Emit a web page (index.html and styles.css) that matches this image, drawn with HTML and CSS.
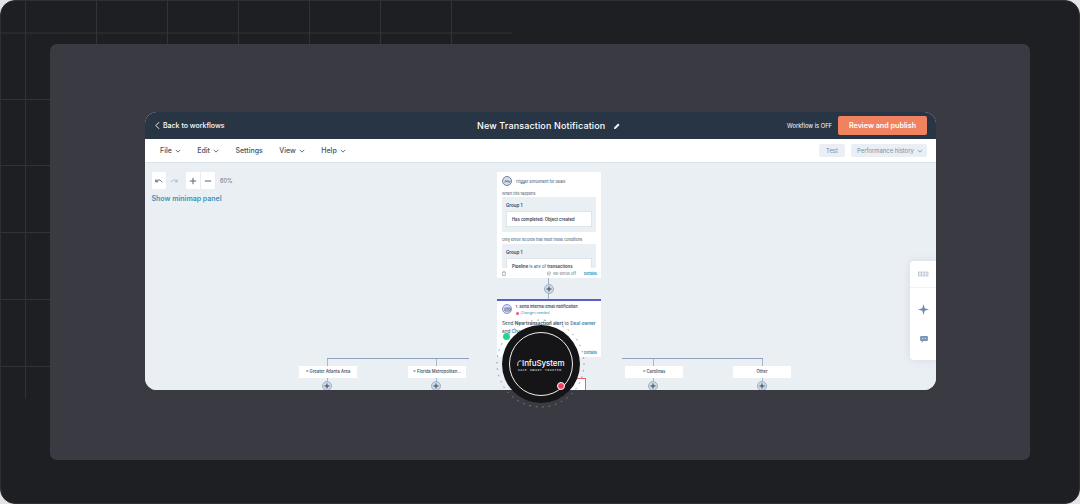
FILE: index.html
```html
<!DOCTYPE html>
<html lang="en">
<head>
<meta charset="utf-8">
<title>Workflow</title>
<link rel="stylesheet" href="styles.css">
</head>
<body>
<div class="frame">
  <svg class="grid" width="1080" height="504" viewBox="0 0 1080 504">
    <path d="M0 33H512M0 99.500H50M0 165.500H50M0 232.500H50M0 299.500H50M0 366.500H50M25.500 0V399M96.500 0V44M167.500 0V44M238.500 0V44M309.500 0V44M380.500 0V44M451.500 0V44" />
  </svg>
  <div class="panel">
    <div class="app">
      <header class="topbar">
        <div class="back"><svg class="back-icon" viewBox="0 0 6 10"><path d="M5 1 1 5l4 4"/></svg>Back to workflows</div>
        <div class="title">New Transaction Notification<svg class="pencil" viewBox="0 0 8 8"><path d="M0 8l.5-2.300L5.500.7l1.800 1.800-5 5z"/></svg></div>
        <div class="top-right"><span class="status">Workflow is OFF</span><span class="publish">Review and publish</span></div>
      </header>
      <nav class="menubar">
        <div class="menu">
          <span class="menu-item">File<svg class="chev" viewBox="0 0 8 5"><path d="M1 1l3 3 3-3"/></svg></span>
          <span class="menu-item">Edit<svg class="chev" viewBox="0 0 8 5"><path d="M1 1l3 3 3-3"/></svg></span>
          <span class="menu-item">Settings</span>
          <span class="menu-item">View<svg class="chev" viewBox="0 0 8 5"><path d="M1 1l3 3 3-3"/></svg></span>
          <span class="menu-item">Help<svg class="chev" viewBox="0 0 8 5"><path d="M1 1l3 3 3-3"/></svg></span>
        </div>
        <div class="menu-actions">
          <span class="ghost test">Test</span>
          <span class="ghost perf">Performance history<svg class="chev dim" viewBox="0 0 8 5"><path d="M1 1l3 3 3-3"/></svg></span>
        </div>
      </nav>
      <main class="canvas">
        <div class="tools">
          <div class="tool-row">
            <div class="btns">
              <span class="btn"><svg viewBox="0 0 10 8"><path d="M1 4.500C3 2 6.500 2 9 5.500M1 2v3h3"/></svg></span>
              <span class="btn off"><svg viewBox="0 0 10 8"><path d="M9 4.500C7 2 3.500 2 1 5.500M9 2v3H6"/></svg></span>
            </div>
            <div class="btns">
              <span class="btn"><svg viewBox="0 0 10 10"><path d="M5 1v8M1 5h8"/></svg></span>
              <span class="btn"><svg viewBox="0 0 10 10"><path d="M1 5h8"/></svg></span>
            </div>
            <span class="zoom">60%</span>
          </div>
          <div class="minimap">Show minimap panel</div>
        </div>

        <div class="stem s1"></div>
        <section class="card trigger">
          <div class="card-head"><span class="badge"><svg viewBox="0 0 12 8"><path d="M1 6l2-4 2 3 2-3 2 4 2-3"/></svg></span><span class="head-text">Trigger enrollment for deals</span></div>
          <p class="label">When this happens</p>
          <div class="group"><div class="group-title">Group 1</div><div class="cond"><b>Has completed: Object created</b></div></div>
          <p class="label next">Only enroll records that meet these conditions</p>
          <div class="group"><div class="group-title">Group 1</div><div class="cond"><b>Pipeline</b> is any of <b>transactions</b></div></div>
          <div class="card-foot"><svg class="foot-icon" viewBox="0 0 6 7"><path d="M1 1.500h4V6.500H1zM2 .5h2"/></svg><span class="reenroll"><svg class="foot-icon" viewBox="0 0 7 7"><path d="M1 1h5v3H2M1 1v5h5"/></svg>Re-enroll off</span><span class="details">Details</span></div>
        </section>

        <span class="plus p0"><svg viewBox="0 0 8 8"><path d="M4 1.500v5M1.500 4h5"/></svg></span>

        <section class="card action">
          <div class="card-head"><span class="badge blue"><svg viewBox="0 0 12 8"><path d="M1.500 1.500h9v5h-9zM3 3.500h6"/></svg></span><div><div class="head-text strong">1. Send internal email notification</div><div class="changes"><i class="red-dot"></i>Changes needed</div></div></div>
          <p class="send">Send <b>New transaction alert</b> to <a>Deal owner</a> and <a>Chad Bunker</a></p>
          <div class="card-foot"><span class="details end">Details</span></div>
        </section>

        <div class="branch-line left"></div>
        <div class="branch-line right"></div>
        <div class="drop d1"></div>
        <div class="drop d2"></div>
        <div class="drop d3"></div>
        <div class="drop d4"></div>
        <div class="branch b1">× Greater Atlanta Area</div>
        <div class="branch b2">× Florida Metropolitan...</div>
        <div class="branch b3">× Carolinas</div>
        <div class="branch b4">Other</div>
        <span class="plus p1"><svg viewBox="0 0 8 8"><path d="M4 1.500v5M1.500 4h5"/></svg></span>
        <span class="plus p2"><svg viewBox="0 0 8 8"><path d="M4 1.500v5M1.500 4h5"/></svg></span>
        <span class="plus p3"><svg viewBox="0 0 8 8"><path d="M4 1.500v5M1.500 4h5"/></svg></span>
        <span class="plus p4"><svg viewBox="0 0 8 8"><path d="M4 1.500v5M1.500 4h5"/></svg></span>
        <div class="red-box"></div>

        <aside class="side">
          <span class="side-cell first"><svg class="dots" viewBox="0 0 12 6"><path d="M0 1h12M0 3h12M0 5h12"/></svg></span>
          <span class="side-cell mid"><svg class="spark" viewBox="0 0 12 12"><path d="M6 0l1.300 4.700L12 6 7.300 7.300 6 12 4.700 7.300 0 6l4.700-1.300z"/></svg></span>
          <span class="side-cell last"><svg class="chat" viewBox="0 0 10 9"><path d="M1 0h8a1 1 0 0 1 1 1v4.500a1 1 0 0 1-1 1H4L2 9V6.500H1a1 1 0 0 1-1-1V1a1 1 0 0 1 1-1z"/><path class="chat-dots" d="M2.500 3.300h1M4.500 3.300h1M6.500 3.300h1"/></svg></span>
        </aside>
      </main>
    </div>
    <div class="logo-wrap">
      <svg class="ring" width="90" height="90" viewBox="0 0 90 90"><circle cx="44.500" cy="45.500" r="43.500"/></svg>
      <div class="logo">
        <div class="logo-inner">
          <div class="logo-name"><svg class="arch" viewBox="0 0 6 8"><path d="M1 7.500V4.500A3 3 0 0 1 5.500 1.800"/></svg>InfuSystem</div>
          <div class="logo-tag">SAFE. SMART. TRUSTED.</div>
        </div>
      </div>
      <i class="dot green"></i>
      <i class="dot pink"></i>
    </div>
  </div>
</div>
</body>
</html>
```
FILE: styles.css
```css
* { box-sizing: border-box; }
html, body { margin: 0; padding: 0; background: #e4e4e6; }
body { width: 1080px; height: 504px; overflow: hidden; font-family: "Inter", "Liberation Sans", sans-serif; }
.frame { position: relative; width: 1080px; height: 504px; padding: 44px 50px; background: #1e1f23; border: 1px solid #2e2f34; border-radius: 15px; overflow: hidden; }
.grid { position: absolute; left: -1px; top: -1px; }
.grid path { fill: none; stroke: #323338; stroke-width: 1; }
.panel { position: relative; width: 980px; height: 416px; margin: -1px 0 0 -1px; padding: 68px 94px 70px 95px; background: #3a3a42; border-radius: 7px; }
.app { display: flex; flex-direction: column; width: 791px; height: 278px; border-radius: 12px; overflow: hidden; background: #eaeff4; }
.topbar { position: relative; display: flex; align-items: center; justify-content: space-between; height: 27px; padding: 0 9px 0 10px; background: #283545; color: #fff; flex: none; }
.back { display: flex; align-items: center; gap: 3px; font-size: 7px; font-weight: 500; }
.back-icon { width: 5px; height: 9px; }
.back-icon path, .chev path { fill: none; stroke: currentColor; stroke-width: 1.100; }
.title { position: absolute; left: 332px; display: flex; align-items: center; gap: 9px; font-size: 9px; font-weight: 500; letter-spacing: .13px; }
.pencil { width: 6px; height: 6px; fill: #fff; }
.top-right { display: flex; align-items: center; gap: 6px; }
.status { font-size: 5.800px; }
.publish { display: block; width: 89px; height: 19px; line-height: 19px; text-align: center; background: #f0825f; border-radius: 2px; font-size: 7.200px; font-weight: 600; }
.menubar { display: flex; align-items: center; justify-content: space-between; height: 24px; padding: 0 9px 0 15px; background: #fff; border-bottom: 1px solid #d8e2ea; flex: none; }
.menu { display: flex; gap: 16.500px; }
.menu-item { display: flex; align-items: center; gap: 3px; font-size: 7px; font-weight: 500; color: #3f5068; }
.chev { width: 6px; height: 4px; color: #3f5068; }
.chev.dim { color: #7c8ea3; margin-left: 3px; }
.menu-actions { display: flex; gap: 6px; }
.ghost { display: flex; align-items: center; height: 13px; background: #e9eff4; border-radius: 2px; font-size: 5.900px; color: #7c8ea3; }
.test { width: 26px; justify-content: center; }
.perf { width: 76px; padding-left: 6px; }
.canvas { position: relative; flex: 1; overflow: hidden; background: #eaeff4; }
.tools { padding: 9px 0 0 7px; }
.tool-row { display: flex; align-items: center; gap: 4px; }
.btns { display: flex; }
.btn { display: flex; align-items: center; justify-content: center; width: 15px; height: 17px; background: #fff; border-right: 1px solid #e6ecf1; }
.btn.off { background: #e9eff4; }
.btn svg { width: 8px; height: 8px; fill: none; stroke: #42526a; stroke-width: 1.100; }
.btn.off svg { stroke: #a8b6c5; }
.zoom { font-size: 5.600px; color: #5c6d83; }
.minimap { margin: 5px 0 0 -.5px; font-size: 7px; font-weight: 600; color: #3c94b3; }

.card { position: absolute; left: 352px; width: 104px; background: #fff; overflow: hidden; }
.trigger { top: 9px; height: 106px; padding: 4px 5px; }
.action { top: 136px; height: 58px; padding: 3px 5px; border-top: 2px solid #5a5fc6; }
.card-head { display: flex; align-items: center; gap: 3.500px; height: 10px; }
.badge { display: flex; align-items: center; justify-content: center; width: 10px; height: 10px; flex: none; border-radius: 50%; background: #d4dde8; border: 1px solid #6f85a0; }
.badge.blue { background: #d8dcf4; border-color: #8b91dd; }
.badge svg { width: 7px; height: 5px; fill: none; stroke: #33475b; stroke-width: 1; }
.head-text { margin-top: 2px; font-size: 3.800px; line-height: 6px; color: #33475b; white-space: nowrap; }
.head-text.strong { font-size: 3.900px; font-weight: 600; }
.changes { display: flex; align-items: center; gap: 2px; font-size: 3.600px; line-height: 6px; color: #3c94b3; white-space: nowrap; }
.red-dot { width: 3px; height: 3px; background: #f2547d; border-radius: 50%; }
.label { margin: 5px 0 0; font-size: 3.700px; line-height: 6px; color: #33475b; white-space: nowrap; }
.label.next { margin: 5px 0 1px; }
.group { height: 35px; padding: 5.500px 4px 0; background: #eaeff4; border-radius: 1px; }
.group-title { height: 6px; font-size: 4.500px; line-height: 6px; font-weight: 600; color: #33475b; margin-bottom: 2px; }
.cond { display: block; height: 16px; padding: 0 5px; background: #fff; border: 1px solid #dde5ec; font-size: 4.200px; line-height: 15px; color: #33475b; white-space: nowrap; }
.cond b { font-weight: 600; }
.card-foot { position: absolute; left: 0; right: 0; bottom: 0; display: flex; align-items: center; height: 10px; padding: 0 4px 0 5px; background: #fff; font-size: 3.900px; color: #5c6d83; }
.foot-icon { width: 4px; height: 5px; fill: none; stroke: #5c6d83; stroke-width: .7; }
.reenroll { display: flex; align-items: center; gap: 2px; margin-left: auto; margin-right: 8px; white-space: nowrap; }
.details { color: #2e86ab; font-weight: 600; }
.details.end { margin-left: auto; }
.send { margin: 6px 0 0; font-size: 4.700px; line-height: 7.500px; color: #33475b; }
.send b { font-weight: 600; }
.send a { color: #2e86ab; font-weight: 600; }

.stem { position: absolute; left: 403px; width: 1px; background: #9fb0c2; }
.s1 { top: 115px; height: 22px; }
.plus { position: absolute; display: flex; align-items: center; justify-content: center; width: 10px; height: 10px; border-radius: 50%; background: #cfd8e4; border: 1px solid #9fb0c2; }
.plus svg { width: 8px; height: 8px; fill: none; stroke: #33475b; stroke-width: 1; }
.p0 { left: 399px; top: 121px; }
.p1 { left: 177px; top: 218px; }
.p2 { left: 286px; top: 218px; }
.p3 { left: 503px; top: 218px; }
.p4 { left: 612px; top: 218px; }
.branch-line { position: absolute; top: 195px; height: 1px; background: #8ea3bb; }
.branch-line.left { left: 182px; width: 142px; }
.branch-line.right { left: 477px; width: 141px; }
.drop { position: absolute; top: 196px; width: 1px; height: 25px; background: #a9b8c8; }
.d1 { left: 182px; }
.d2 { left: 291px; }
.d3 { left: 508px; }
.d4 { left: 617px; }
.branch { position: absolute; top: 203px; width: 58px; height: 12px; line-height: 12px; text-align: center; background: #fff; font-size: 4.200px; font-weight: 500; color: #33475b; white-space: nowrap; }
.b1 { left: 154px; }
.b2 { left: 263px; }
.b3 { left: 480px; }
.b4 { left: 588px; }
.red-box { position: absolute; left: 404px; top: 215px; width: 37px; height: 30px; background: #fff; border: 1px solid #e8616d; }
.side { position: absolute; right: -1px; top: 98px; display: flex; flex-direction: column; width: 27px; height: 99px; padding-bottom: 12px; background: #fff; border-radius: 4px 0 0 4px; box-shadow: 0 0 8px rgba(90,110,135,.14); }
.side-cell { display: flex; align-items: center; justify-content: center; }
.side-cell.first { height: 27px; border-bottom: 1px solid #f0f3f6; }
.side-cell.mid { height: 42px; }
.side-cell.last { height: 18px; }
.dots { width: 11px; height: 6px; fill: none; stroke: #7b8fa8; stroke-width: 1; stroke-dasharray: 1 .7; }
.spark { width: 11px; height: 11px; fill: #6f8bab; }
.chat { width: 8px; height: 7px; fill: #7b95b5; }
.chat-dots { fill: none; stroke: #fff; stroke-width: 1; }

.logo-wrap { position: absolute; left: 446px; top: 274px; width: 90px; height: 90px; }
.ring { position: absolute; inset: 0; }
.ring circle { fill: none; stroke: #8b8c92; stroke-width: 1; stroke-dasharray: 1.500 5; }
.logo { position: absolute; left: 5.500px; top: 6.500px; width: 78px; height: 78px; padding: 7px; background: #151517; border-radius: 50%; }
.logo-inner { display: flex; flex-direction: column; align-items: center; justify-content: center; width: 64px; height: 64px; border: 1px solid #f1f1f1; border-radius: 50%; color: #fff; }
.logo-name { display: flex; align-items: flex-start; gap: .5px; margin-top: 3px; font-size: 8px; line-height: 9px; font-weight: 500; letter-spacing: -.1px; }
.arch { width: 5px; height: 8px; fill: none; stroke: #fff; stroke-width: 1; }
.logo-tag { margin-top: 1px; font-size: 2.500px; line-height: 3px; font-weight: 500; letter-spacing: .7px; white-space: nowrap; }
.dot { position: absolute; display: block; border-radius: 50%; }
.green { left: 7px; top: 15px; width: 7px; height: 7px; background: #1ed890; }
.pink { left: 60.500px; top: 64px; width: 6px; height: 6px; background: #f2405f; border: 1px solid #fff; box-sizing: content-box; }
```
